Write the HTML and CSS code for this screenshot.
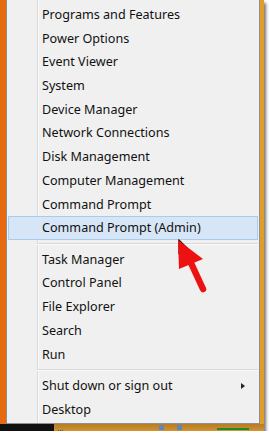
FILE: index.html
```html
<!DOCTYPE html>
<html lang="en">
<head>
    <meta charset="UTF-8">
    <title>Quick Link menu</title>
    <link rel="stylesheet" href="styles.css">
</head>
<body>
    <div class="shot">
        <div class="menu">
            <div class="item">Programs and Features</div>
            <div class="item">Power Options</div>
            <div class="item">Event Viewer</div>
            <div class="item">System</div>
            <div class="item">Device Manager</div>
            <div class="item">Network Connections</div>
            <div class="item">Disk Management</div>
            <div class="item">Computer Management</div>
            <div class="item">Command Prompt</div>
            <div class="item active">Command Prompt (Admin)</div>
            <div class="sep"></div>
            <div class="item">Task Manager</div>
            <div class="item">Control Panel</div>
            <div class="item">File Explorer</div>
            <div class="item">Search</div>
            <div class="item">Run</div>
            <div class="sep"></div>
            <div class="item sub">Shut down or sign out <span class="caret"></span></div>
            <div class="item">Desktop</div>
        </div>
        <div class="taskbar">
            <div class="start"></div>
            <div class="tray">
                <span class="dots">...</span>
                <span class="tb-icon"></span>
                <span class="tb-icon"></span>
                <span class="tb-green"></span>
            </div>
        </div>

        <!-- callout arrow + mouse pointer drawn over the menu -->
        <svg class="pointer" width="40" height="56" viewBox="0 0 40 56">
            <path d="M2 1 L2 14 L5 11 L8 17 L10 16 L7 10 L11 10 Z" fill="#fff" stroke="#111" stroke-width="1.2"/>
            <line x1="14" y1="24" x2="26" y2="50" stroke="#ee1111" stroke-width="6.5" stroke-linecap="round"/>
            <path d="M1 1 L2 30 L26 20 Z" fill="#ee1111"/>
        </svg>
    </div>
</body>
</html>
```

FILE: styles.css
```css
body {
    margin: 0;
    background-color: white;
    font-family: "Noto Sans", "Open Sans", sans-serif;
}
.shot {
    position: relative;
    width: 264px;
    height: 431px;
    background: linear-gradient(to right, #e8690f, #e78a1c 60%, #e39d26);
    box-shadow: 2px 3px 3px rgba(0, 0, 0, 0.55);
    display: flex;
    flex-direction: column;
}
.menu {
    box-sizing: border-box;
    margin-left: 6px;
    width: 254px;
    height: 424px;
    padding-top: 3px;
    background-color: #f0f0f0;
    background-image: linear-gradient(to right, transparent 30px, #d9d9d9 30px, #d9d9d9 31px, #fbfbfb 31px, #fbfbfb 32px, transparent 32px);
    border: 1px solid #8f8f8f;
    border-top: none;
}
.item {
    height: 23.7px;
    line-height: 23.7px;
    padding-left: 35px;
    font-size: 12.6px;
    color: #111;
    white-space: nowrap;
}
.item.active {
    box-sizing: border-box;
    margin: 0 1px;
    padding-left: 33px;
    line-height: 21.7px;
    background-color: #d6e6f6;
    border: 1px solid #a9cbee;
}
.sub {
    display: flex;
    align-items: center;
    justify-content: space-between;
    padding-right: 14px;
}
.caret {
    width: 0;
    height: 0;
    border-top: 3.5px solid transparent;
    border-bottom: 3.5px solid transparent;
    border-left: 4px solid #222;
}
.sep {
    height: 1px;
    margin: 3px 1px 2.9px 30px;
    background-color: #d8d8d8;
    border-bottom: 1px solid #fbfbfb;
}
.taskbar {
    flex: 1;
    display: flex;
}
.start {
    width: 54px;
    background-color: #111;
}
.tray {
    flex: 1;
    display: flex;
    align-items: center;
    padding-left: 3px;
    background: linear-gradient(#b87b22, #cf9433);
}
.dots {
    font-size: 8px;
    line-height: 6px;
    color: #333;
    width: 102px;
}
.tb-icon {
    width: 5px;
    height: 5px;
    margin-right: 13px;
    background-color: #5d88b6;
}
.tb-green {
    margin-left: 22px;
    width: 32px;
    height: 2px;
    align-self: flex-end;
    margin-bottom: 1px;
    background-color: #1e8a2a;
}
.pointer {
    position: absolute;
    left: 177px;
    top: 239px;
}
```
